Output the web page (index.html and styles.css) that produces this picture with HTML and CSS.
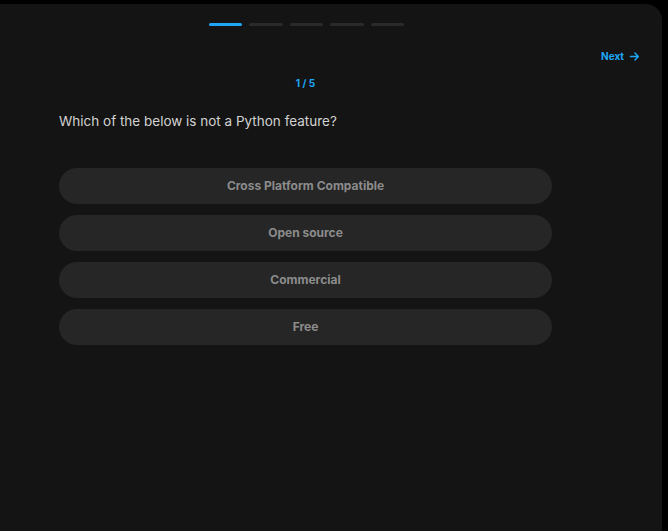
FILE: index.html
```html
<!DOCTYPE html>
<html>
<head>
<meta charset="utf-8">
<link rel="stylesheet" href="styles.css">
</head>
<body>
<div class="card">
  <div class="column">
    <div class="progress">
      <span class="seg active"></span>
      <span class="seg"></span>
      <span class="seg"></span>
      <span class="seg"></span>
      <span class="seg"></span>
    </div>
  </div>
  <div class="nav">
    <span class="next">Next
      <svg width="11" height="11" viewBox="0 0 12 12"><path d="M1.5 6h8.5M6.5 2.2L10.2 6 6.5 9.8" fill="none" stroke="currentColor" stroke-width="1.6" stroke-linecap="round" stroke-linejoin="round"/></svg>
    </span>
  </div>
  <div class="column body">
    <div class="counter">1 / 5</div>
    <div class="question">Which of the below is not a Python feature?</div>
    <div class="options">
      <div class="option">Cross Platform Compatible</div>
      <div class="option">Open source</div>
      <div class="option">Commercial</div>
      <div class="option">Free</div>
    </div>
  </div>
</div>
</body>
</html>
```

FILE: styles.css
```css
html, body {
  margin: 0;
  padding: 0;
  background: #000;
  height: 100%;
  overflow: hidden;
}
body {
  font-family: Inter, "Noto Sans", sans-serif;
}
.card {
  margin-top: 4px;
  width: 662px;
  height: 527px;
  background: #141414;
  border-radius: 0 16px 0 0;
  box-sizing: border-box;
  padding-top: 19px;
}
.column {
  width: 611px;
  box-sizing: border-box;
  padding: 0 59px;
}
.progress {
  display: flex;
  justify-content: center;
  gap: 7px;
  padding-left: 2px;
}
.seg {
  width: 33.4px;
  height: 3px;
  border-radius: 2px;
  background: #2a2a2a;
}
.seg.active {
  background: #1ea7f5;
}
.nav {
  display: flex;
  justify-content: flex-end;
  padding-right: 22px;
  margin-top: 23px;
}
.next {
  display: flex;
  align-items: center;
  gap: 5px;
  color: #1ea7f5;
  font-size: 10px;
  font-weight: 700;
  line-height: 14px;
}
.counter {
  margin-top: 13px;
  text-align: center;
  color: #1ea7f5;
  font-size: 10px;
  font-weight: 700;
  line-height: 14px;
}
.question {
  margin-top: 21px;
  color: #d2d2d2;
  font-size: 13.5px;
  line-height: 20px;
}
.options {
  margin-top: 37px;
  display: flex;
  flex-direction: column;
  gap: 11px;
}
.option {
  height: 36px;
  box-sizing: border-box;
  padding-bottom: 2px;
  border-radius: 18px;
  background: #262626;
  color: #8c8c8c;
  font-size: 12px;
  font-weight: 700;
  display: flex;
  align-items: center;
  justify-content: center;
}
```
